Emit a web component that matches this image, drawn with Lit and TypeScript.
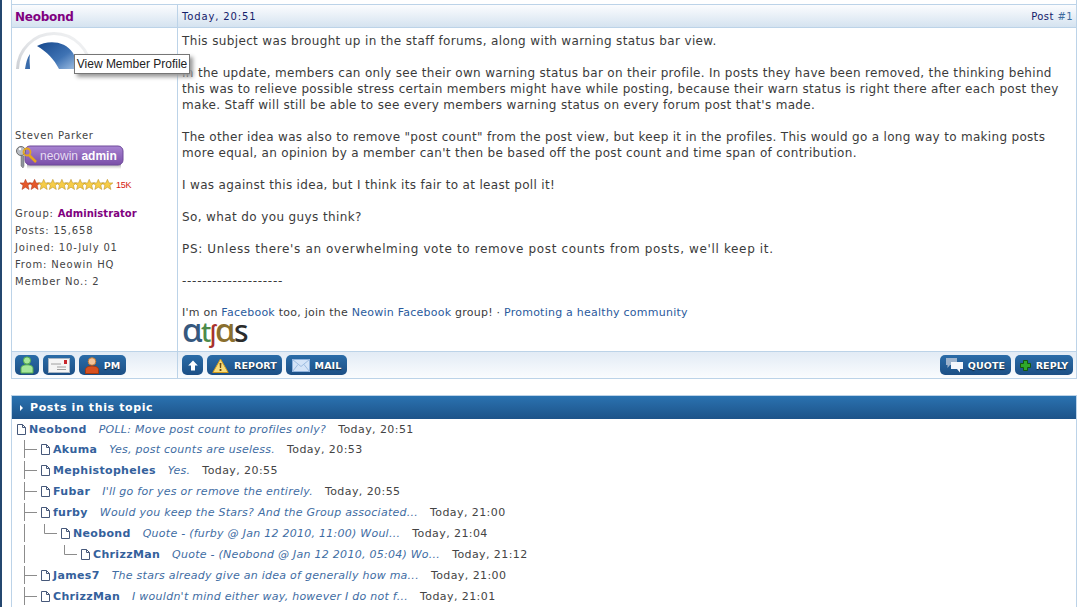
import { LitElement, html, css, svg } from "lit";
import { customElement } from "lit/decorators.js";

const rows = [
  { l: 0, n: "Neobond", t: "POLL: Move post count to profiles only?", d: "Today, 20:51", h: 20 },
  { l: 1, n: "Akuma", t: "Yes, post counts are useless.", d: "Today, 20:53", h: 21 },
  { l: 1, n: "Mephistopheles", t: "Yes.", d: "Today, 20:55", h: 21 },
  { l: 1, n: "Fubar", t: "I'll go for yes or remove the entirely.", d: "Today, 20:55", h: 21 },
  { l: 1, n: "furby", t: "Would you keep the Stars? And the Group associated...", d: "Today, 21:00", h: 21 },
  { l: 2, n: "Neobond", t: "Quote - (furby @ Jan 12 2010, 11:00) Woul...", d: "Today, 21:04", h: 21 },
  { l: 3, n: "ChrizzMan", t: "Quote - (Neobond @ Jan 12 2010, 05:04) Wo...", d: "Today, 21:12", h: 21 },
  { l: 1, n: "James7", t: "The stars already give an idea of generally how ma...", d: "Today, 21:00", h: 21 },
  { l: 1, n: "ChrizzMan", t: "I wouldn't mind either way, however I do not f...", d: "Today, 21:01", h: 21 },
];

const connector = (l: number) => {
  if (l === 0) return null;
  const w = 24 + (l - 1) * 20;
  const trunk = svg`<path d="M7.5 1V19" stroke="#8c8c8c" fill="none"/>`;
  const arm = l === 1
    ? svg`<path d="M8 10.5H20" stroke="#8c8c8c" fill="none"/>`
    : svg`<path d="M${w - 24 + 7.5} 1V10.5H${w - 4}" stroke="#8c8c8c" fill="none"/>`;
  return html`<svg class="conn" width=${w} height="21" viewBox="0 0 ${w} 21">${trunk}${arm}</svg>`;
};

const doc = html`<svg class="doc" width="9" height="11" viewBox="0 0 9 11"><path d="M.5.5H5.500L8.500 3.500V10.500H.5ZM5.500.5V3.500H8.500" fill="#fff" stroke="#46587a"/></svg>`;

const star = (c: string, e: string, x: number) => svg`<path transform="translate(${x} 0)" d="M5.500 .3 7.100 3.900H11L8 6.400 9 10.500 5.500 8.200 2 10.500 3 6.400 0 3.900H3.900Z" fill=${c} stroke=${e} stroke-width=".5"/>`;

const icons = {
  person: html`<svg width="14" height="18" viewBox="0 0 14 18"><circle cx="7" cy="4.500" r="3.600" fill="#a7e69a" stroke="#55ad4c"/><path d="M1 17V12.500C1 9.800 4 8.800 7 8.800S13 9.800 13 12.500V17Z" fill="#a5e69a" stroke="#55ad4c"/></svg>`,
  card: html`<svg width="22" height="15" viewBox="0 0 22 15"><rect x=".5" y=".5" width="21" height="14" fill="#f5f5f5" stroke="#a9b6c4"/><rect x="16" y="2" width="3" height="4" fill="#c8272c"/><path d="M3 6H13M9 9H18M9 11.500H18" stroke="#a0a0a0" fill="none"/></svg>`,
  pm: html`<svg width="14" height="17" viewBox="0 0 14 17"><circle cx="7" cy="4.500" r="3.800" fill="#f3c49a" stroke="#c07a35"/><path d="M.5 16.500V12.500C.5 10 4 9 7 9S13.500 10 13.500 12.500V16.500Z" fill="#d8501f" stroke="#a23a10"/></svg>`,
  up: html`<svg width="10" height="11" viewBox="0 0 10 11"><path d="M5 .5 9.800 5.500H7V10.500H3V5.500H.2Z" fill="#fff"/></svg>`,
  warn: html`<svg width="17" height="15" viewBox="0 0 17 15"><path d="M8.500 1 16.200 14.500H.8Z" fill="#f8dc7a" stroke="#d19a1c" stroke-linejoin="round"/><path d="M7.600 5H9.400L9.100 10H7.900ZM7.600 11H9.400V13H7.600Z" fill="#6a4a12"/></svg>`,
  mail: html`<svg width="18" height="13" viewBox="0 0 18 13"><rect x=".5" y=".5" width="17" height="12" fill="#d4e4f8" stroke="#8fb2dc"/><path d="M.5.5 9 7.500 17.500.5M.5 12.500 6 5.500M17.500 12.500 12 5.500" fill="none" stroke="#9cbce0"/></svg>`,
  quote: html`<svg width="17" height="15" viewBox="0 0 17 15"><path d="M0 0H11V7H4L1.500 10V7H0Z" fill="#9db3cc"/><path d="M5 4H17V11H14V14.500L11 11H5Z" fill="#f4f7fb"/></svg>`,
  plus: html`<svg width="11" height="11" viewBox="0 0 11 11"><path d="M3.500.5H7.500V3.500H10.500V7.500H7.500V10.500H3.500V7.500H.5V3.500H3.500Z" fill="#2fa82a" stroke="#14570f"/></svg>`,
};

@customElement("app-root")
export class AppRoot extends LitElement {
  static styles = css`
    :host { display: block; width: 1082px; height: 607px; overflow: hidden; background: #fff; font-family: "DejaVu Sans", Verdana, sans-serif; color: #333; border-left: 2px solid #24476f; box-sizing: border-box; padding: 0 5px 0 9px; }
    a { color: #2a5a9c; text-decoration: none; }
    .post { border: 1px solid #bcd3e8; border-top: 0; padding-top: 4px; position: relative; display: grid; grid-template-columns: 166px 1fr; grid-template-rows: 24px 323px 27px; }
    .head, .foot { background: linear-gradient(#fbfcfe, #d5e3f0); border-top: 1px solid #bcd3e8; border-bottom: 1px solid #bcd3e8; display: flex; align-items: center; }
    .foot { background: linear-gradient(#e2ebf5, #fafcfe); border-bottom: 0; gap: 4px; padding: 0 3px; }
    .foot.right { padding-left: 4px; }
    .left { border-right: 1px solid #bcd3e8; }
    .head.left { padding-left: 3px; font-size: 12px; font-weight: bold; color: #800080; letter-spacing: -.25px; padding-top: 1px; box-sizing: border-box; }
    .head.right { justify-content: space-between; padding: 0 3px 0 4px; font-size: 10px; color: #14206a; letter-spacing: .42px; }
    .date-top { letter-spacing: .86px; }
    .head.right a { color: #3d6c9e; }
    .side { padding: 4px 0 0 3px; font-size: 10px; letter-spacing: .7px; color: #444; display: flex; flex-direction: column; align-items: flex-start; }
    .avatar { height: 37px; margin-bottom: 61px; display: block; }
    .real { line-height: 12px; margin-bottom: 3px; }
    .badge { display: block; margin-bottom: 8px; letter-spacing: 0; }
    .stars { display: flex; align-items: center; gap: 3px; padding-left: 5px; height: 15px; margin-bottom: 13px; }
    .kilo { font: 9px "Liberation Sans", sans-serif; color: #d4200f; letter-spacing: -.2px; }
    .meta { line-height: 17px; letter-spacing: .82px; }
    .meta b { color: #800080; letter-spacing: .05px; }
    .msg { padding: 5px 4px 0 4px; font-size: 12px; line-height: 16px; letter-spacing: .36px; color: #3b3b3b; }
    .p2, .p3 { letter-spacing: .31px; }
    .p4 { letter-spacing: .33px; }
    .p5 { letter-spacing: .38px; }
    .p6 { letter-spacing: .64px; }
    .dash { letter-spacing: .72px; }
    .sig { font-size: 11px; letter-spacing: .24px; vertical-align: 1px; }
    .atlas { display: flex; font: 500 33px/25px "Noto Sans", sans-serif; height: 25px; margin-top: -4px; letter-spacing: -1.5px; align-items: baseline; }
    .a1 { color: #36587e; } .t { color: #4c8a4a; font-size: 27px; } .l { color: #a8322c; font-size: 24px; } .a2 { color: #8a6f2e; } .s { color: #2c2c2c; font-size: 30px; }
    .spacer { flex: 1; }
    .btn { height: 20px; box-sizing: border-box; background: linear-gradient(#2a6ca8, #1c4f85); border-radius: 5px; display: flex; align-items: center; justify-content: center; gap: 5px; color: #fff; font-size: 9.5px; font-weight: bold; text-shadow: 0 1px 1px #123; letter-spacing: .1px; }
    .w24 { width: 24px; } .w32 { width: 32px; } .w47 { width: 47px; } .w21 { width: 21px; } .w75 { width: 75px; } .w61 { width: 61px; } .w71 { width: 71px; } .w58 { width: 58px; }
    .tip { position: absolute; left: 62px; top: 54px; height: 20px; width: 116px; box-sizing: border-box; background: #fff; border: 1px solid #767676; box-shadow: 3px 3px 4px #999; font: 12px/18px "Liberation Sans", sans-serif; color: #222; text-align: center; white-space: nowrap; }
    .topic { margin-top: 16px; border: 1px solid #bcd3e8; border-bottom: 0; }
    .bar { height: 23px; background: linear-gradient(#2a72b0, #1d5389); color: #fff; font-size: 11px; font-weight: bold; letter-spacing: .62px; display: flex; align-items: center; gap: 7px; padding-left: 8px; }
    .arrow { width: 0; height: 0; border-left: 3px solid #fff; border-top: 3px solid transparent; border-bottom: 3px solid transparent; margin-top: 1px; }
    .list { padding-left: 5px; }
    .row { display: flex; align-items: center; font-size: 11px; letter-spacing: .36px; white-space: nowrap; }
    .conn { flex: none; }
    .doc { flex: none; margin-right: 3px; }
    .name { font-weight: bold; color: #34619c; letter-spacing: .33px; margin-right: 12px; }
    .title { font-style: italic; color: #3f6da3; margin-right: 12px; letter-spacing: .26px; }
    .date { color: #444; letter-spacing: .42px; }
  `;

  render() {
    return html`
      <div class="post">
        <div class="head left">Neobond</div>
        <div class="head right"><span class="date-top">Today, 20:51</span><span>Post <a href="#">#1</a></span></div>
        <div class="left side">
          <svg class="avatar" width="78" height="37" viewBox="0 0 78 37">
            <defs>
              <linearGradient id="sw" x1="0" y1="0" x2="1" y2="1"><stop offset="0" stop-color="#15478c"/><stop offset=".6" stop-color="#3f73b4"/><stop offset="1" stop-color="#9dbde2"/></linearGradient>
              <linearGradient id="ring" x1="0" y1="1" x2="1" y2="0"><stop offset="0" stop-color="#b8bcc2"/><stop offset=".5" stop-color="#e2e4e7"/><stop offset="1" stop-color="#f3f4f5"/></linearGradient>
            </defs>
            <circle cx="39" cy="38" r="36.500" fill="#fff" stroke="url(#ring)" stroke-width="3"/>
            <path d="M22 14C32 8 50 8 58 21C61 26 61 31 59 37H44C39 27 32 20 22 14Z" fill="url(#sw)"/>
            <path d="M10 37C11 31 12 26 15 22C14 28 15 32 15 37Z" fill="#3a6cab"/>
          </svg>
          <div class="real">Steven Parker</div>
          <svg class="badge" width="110" height="24" viewBox="0 0 110 24">
            <defs>
              <linearGradient id="pb" x1="0" y1="0" x2="0" y2="1"><stop offset="0" stop-color="#a884d2"/><stop offset="1" stop-color="#7a4fa8"/></linearGradient>
              <linearGradient id="sh" x1="0" y1="0" x2="0" y2="1"><stop offset="0" stop-color="#aaa"/><stop offset="1" stop-color="#fff"/></linearGradient>
            </defs>
            <rect x="12" y="19" width="94" height="5" fill="url(#sh)"/>
            <rect x="10" y="1" width="98" height="19" rx="5" fill="url(#pb)" stroke="#6f4a9a"/>
            <path d="M6 10V21L8 23 9 21V11Z" fill="#8f949c" stroke="#666" stroke-width=".5"/>
            <circle cx="6" cy="6" r="4.500" fill="#b8bcc3" stroke="#6d6d6d"/>
            <circle cx="5" cy="4" r="1.200" fill="#fff"/>
            <circle cx="12" cy="7" r="3.500" fill="none" stroke="#e6a61c" stroke-width="1.800"/>
            <path d="M14 10L21 17" stroke="#e6a61c" stroke-width="2.500"/>
            <text x="25" y="15" font-family="Liberation Sans" font-size="12" fill="#e6dcf2">neowin <tspan font-weight="bold" fill="#fff">admin</tspan></text>
          </svg>
          <div class="stars">
            <svg width="93" height="11" viewBox="0 0 93 11">
              ${[0,1,2,3,4,5,6,7,8,9].map((i) => i < 2 ? star("#e5582a", "#a8321a", i * 9.1) : star("#f6cc48", "#b58a1c", i * 9.1))}
            </svg>
            <span class="kilo">15K</span>
          </div>
          <div class="meta">
            <div>Group: <b>Administrator</b></div>
            <div>Posts: 15,658</div>
            <div>Joined: 10-July 01</div>
            <div>From: Neowin HQ</div>
            <div>Member No.: 2</div>
          </div>
        </div>
        <div class="msg">
          This subject was brought up in the staff forums, along with warning status bar view.<br><br>
          <span class="p2">In the update, members can only see their own warning status bar on their profile. In posts they have been removed, the thinking behind this was to relieve possible stress certain members might have while posting, because their warn status is right there after each post they make. Staff will still be able to see every members warning status on every forum post that's made.</span><br><br>
          <span class="p3">The other idea was also to remove "post count" from the post view, but keep it in the profiles. This would go a long way to making posts more equal, an opinion by a member can't then be based off the post count and time span of contribution.</span><br><br>
          <span class="p4">I was against this idea, but I think its fair to at least poll it!</span><br><br>
          <span class="p5">So, what do you guys think?</span><br><br>
          <span class="p6">PS: Unless there's an overwhelming vote to remove post counts from posts, we'll keep it.</span><br><br>
          <span class="dash">--------------------</span><br><br>
          <span class="sig">I'm on <a href="#">Facebook</a> too, join the <a href="#">Neowin Facebook</a> group! · <a href="#">Promoting a healthy community</a></span>
          <div class="atlas"><span class="a1">ɑ</span><span class="t">t</span><span class="l">ʃ</span><span class="a2">ɑ</span><span class="s">s</span></div>
        </div>
        <div class="foot left">
          <div class="btn w24">${icons.person}</div>
          <div class="btn w32">${icons.card}</div>
          <div class="btn w47">${icons.pm}PM</div>
        </div>
        <div class="foot right">
          <div class="btn w21">${icons.up}</div>
          <div class="btn w75">${icons.warn}REPORT</div>
          <div class="btn w61">${icons.mail}MAIL</div>
          <div class="spacer"></div>
          <div class="btn w71">${icons.quote}QUOTE</div>
          <div class="btn w58">${icons.plus}REPLY</div>
        </div>
        <div class="tip">View Member Profile</div>
      </div>
      <div class="topic">
        <div class="bar"><span class="arrow"></span>Posts in this topic</div>
        <div class="list">
          ${rows.map((r) => html`
            <div class="row" style="height:${r.h}px">
              ${connector(r.l)}${doc}
              <span class="name">${r.n}</span>
              <span class="title">${r.t}</span>
              <span class="date">${r.d}</span>
            </div>`)}
        </div>
      </div>
    `;
  }
}
